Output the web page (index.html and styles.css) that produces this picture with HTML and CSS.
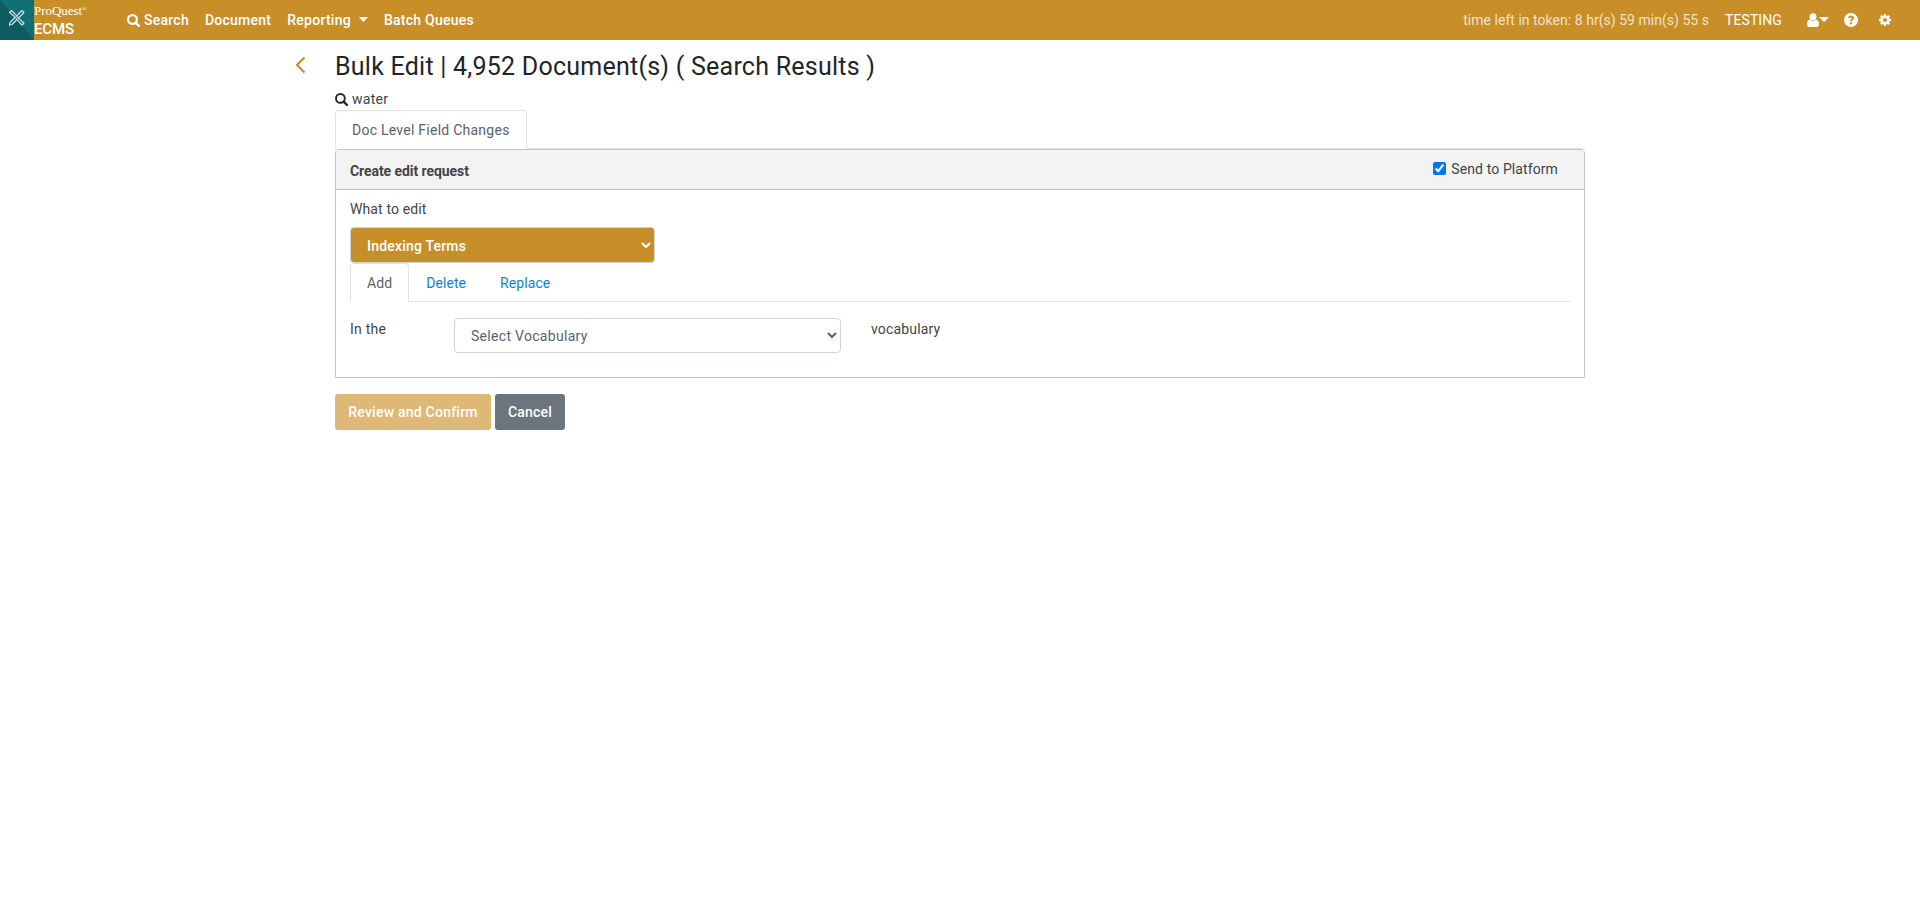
FILE: index.html
```
<!DOCTYPE html>
<html lang="en">
<head>
<meta charset="utf-8">
<title>ProQuest ECMS - Bulk Edit</title>
<link rel="stylesheet" href="styles.css">
</head>
<body>
<header class="navbar">
  <a class="brand">
    <svg class="brand-mark" width="34" height="40" viewBox="0 0 34 40">
      <path fill="#0f6f74" d="M0 0h34v40H0z"/><path fill="#0e5c62" d="M0 0v40h34z"/>
      <g fill="#0e6369" stroke="#d5e6e7" stroke-width="1.1" stroke-linejoin="round">
        <path d="M22 10.500l2 2L12 24.500l-2.600.700.600-2.700z"/>
        <path d="M9.500 12.500l2-2 3 3 4 5 5.500 4.500-2 2-3-3-4-5z"/>
      </g>
    </svg>
    <span class="brand-text"><span class="brand-name">ProQuest<sup>®</sup></span><span class="brand-app">ECMS</span></span>
  </a>
  <nav class="menu">
    <a class="menu-item search"><svg class="icon-search" width="13" height="13" viewBox="0 0 13 13"><circle cx="5.500" cy="5.500" r="4.400" fill="none" stroke="currentColor" stroke-width="2.200"/><path d="M8.700 8.700l3.100 3.100" stroke="currentColor" stroke-width="2.500" stroke-linecap="round"/></svg>Search</a>
    <a class="menu-item document">Document</a>
    <a class="menu-item reporting">Reporting<i class="caret"></i></a>
    <a class="menu-item batch">Batch Queues</a>
  </nav>
  <div class="tools">
    <span class="token">time left in token: 8 hr(s) 59 min(s) 55 s</span>
    <span class="env">TESTING</span>
    <span class="user"><svg width="12" height="14" viewBox="0 0 12 14"><circle cx="6" cy="3.700" r="3.500" fill="#fff"/><path fill="#fff" d="M3 6.500Q6 9 9 6.500q3 .700 3 4.500Q12 14 9.500 14h-7Q0 14 0 11 0 7.200 3 6.500z"/></svg><i class="caret"></i></span>
    <svg class="help" width="14" height="14" viewBox="0 0 14 14"><circle cx="7" cy="7" r="7" fill="#fff"/><path d="M4.900 5.200C5.100 3.900 6 3.500 7 3.500c1.200 0 2.100.700 2.100 1.700C9.100 6.600 7 6.600 7 8.200" fill="none" stroke="#c88e28" stroke-width="1.800"/><path fill="#c88e28" d="M6 9.300h2v1.900H6z"/></svg>
    <svg class="gear" width="12" height="12" viewBox="0 0 12 12"><circle cx="6" cy="6" r="3.300" fill="none" stroke="#fff" stroke-width="2.600"/><path stroke="#fff" stroke-width="2.300" d="M6 0v2M6 10v2M0 6h2M10 6h2M1.800 1.800l1.300 1.300M8.900 8.900l1.300 1.300M1.800 10.200l1.300-1.300M8.900 3.100l1.300-1.300"/></svg>
  </div>
</header>
<main class="page">
  <a class="back"><svg width="11" height="18" viewBox="0 0 11 18"><path d="M9.500 1.500L2 9l7.500 7.500" fill="none" stroke="#c88e28" stroke-width="2.200"/></svg></a>
  <section class="content">
    <h1 class="title">Bulk Edit | 4,952 Document(s) ( Search Results )</h1>
    <div class="query"><svg class="icon-search" width="13" height="13" viewBox="0 0 13 13"><circle cx="5.400" cy="5.400" r="4.400" fill="none" stroke="currentColor" stroke-width="1.900"/><path d="M8.600 8.600l3.300 3.300" stroke="currentColor" stroke-width="2.200" stroke-linecap="round"/></svg><span>water</span></div>
    <div class="tabs tabs-main"><a class="tab active">Doc Level Field Changes</a></div>
    <div class="card">
      <div class="card-header">
        <strong class="card-title">Create edit request</strong>
        <label class="platform"><input class="check" type="checkbox" checked><span>Send to Platform</span></label>
      </div>
      <div class="card-body">
        <div class="label">What to edit</div>
        <select class="select select-field"><option>Indexing Terms</option></select>
        <div class="tabs tabs-action"><a class="tab active">Add</a><a class="tab">Delete</a><a class="tab">Replace</a></div>
        <div class="vocab">
          <span class="vocab-before">In the</span>
          <select class="select select-vocab"><option>Select Vocabulary</option></select>
          <span class="vocab-after">vocabulary</span>
        </div>
      </div>
    </div>
    <div class="actions"><button class="btn btn-primary">Review and Confirm</button><button class="btn btn-secondary">Cancel</button></div>
  </section>
</main>
</body>
</html>
```
FILE: styles.css
```
* { box-sizing: border-box; }
body { margin: 0; background: #fff; color: #444; font: 14px/21px Roboto, sans-serif; letter-spacing: .25px; }
svg { display: block; flex: none; }
.navbar { height: 40px; background: #c88e28; color: #fff; display: flex; align-items: center; letter-spacing: 0; }
.brand { display: flex; width: 127px; height: 40px; }
.brand-text { display: flex; flex-direction: column; }
.brand-name { font: 13px/14px "Liberation Serif", serif; padding-top: 4px; height: 19px; letter-spacing: -.05px; white-space: nowrap; }
.brand-name sup { font-size: 6px; line-height: 0; vertical-align: 4px; }
.brand-app { font-size: 15px; line-height: 20px; font-weight: 500; letter-spacing: -.15px; }
.menu { display: flex; gap: 16px; font-weight: 500; letter-spacing: .25px; }
.menu-item { display: flex; align-items: center; }
.menu .icon-search { margin-right: 4px; }
.caret { width: 9px; height: 5px; background: currentColor; clip-path: polygon(0 0, 100% 0, 50% 100%); }
.reporting .caret { margin: -1px 0 0 8px; }
.tools { display: flex; align-items: center; margin-left: auto; padding-right: 29px; }
.token { color: #f4e3c8; letter-spacing: .03px; }
.env { margin-left: 16px; letter-spacing: .1px; }
.user { display: flex; margin-left: 25px; }
.user .caret { margin: 4px 0 0; width: 10px; height: 5px; }
.help { margin-left: 15px; }
.gear { margin-left: 21px; }
.page { display: flex; padding-left: 295px; }
.back { width: 40px; padding-top: 16px; }
.content { width: 1250px; padding-top: 11px; }
.title { margin: 0; color: #212529; font-size: 25px; line-height: 32px; font-weight: 400; letter-spacing: .24px; }
.query { display: flex; align-items: center; gap: 4px; height: 21px; margin-top: 6px; }
.query svg { color: #212529; }
.tabs { display: flex; height: 39px; border-bottom: 1px solid #dee2e6; }
.tab { height: 39px; padding: 9px 16px 7px; border: 1px solid transparent; border-radius: 4px 4px 0 0; color: #0f7fd8; }
.tabs-action { letter-spacing: .08px; }
.tab.active { background: #fff; border-color: #dee2e6 #dee2e6 #fff; color: #5a6268; }
.card { height: 229px; border: 1px solid #c3c4c7; border-radius: 4px 4px 0 0; }
.card-header { display: flex; justify-content: space-between; height: 40px; padding: 0 26px 0 14px; background: #f3f3f3; border-bottom: 1px solid #c3c4c7; border-radius: 3px 3px 0 0; }
.card-title { font-weight: 700; padding-top: 11px; letter-spacing: -.07px; }
.platform { display: flex; padding-top: 9px; letter-spacing: .1px; }
.check { width: 13px; height: 13px; margin: 3px 5px 0 0; accent-color: #0075ff; }
.card-body { padding: 9px 14px 0; }
.label { letter-spacing: .12px; }
.select { display: block; height: 36px; padding: 0 12px; border: 1px solid #ced4da; border-radius: 4px; font: inherit; letter-spacing: .3px; color: #5a6268; background: #fff; }
.select-field { width: 305px; margin-top: 7px; padding-top: 1px; background: #c88e28; color: #fff; font-weight: 500; letter-spacing: .2px; }
.vocab { display: flex; margin-top: 16px; }
.vocab-before { width: 104px; padding-top: 1px; }
.select-vocab { width: 387px; height: 35px; }
.vocab-after { margin-left: 30px; padding-top: 1px; letter-spacing: .17px; }
.actions { display: flex; gap: 4px; margin-top: 16px; }
.btn { height: 36px; padding: 0; border: 0; border-radius: 3px; color: #fff; font: inherit; font-weight: 500; letter-spacing: .23px; }
.btn-primary { width: 156px; background: #ddb877; }
.btn-secondary { width: 70px; background: #6c757d; }
```
